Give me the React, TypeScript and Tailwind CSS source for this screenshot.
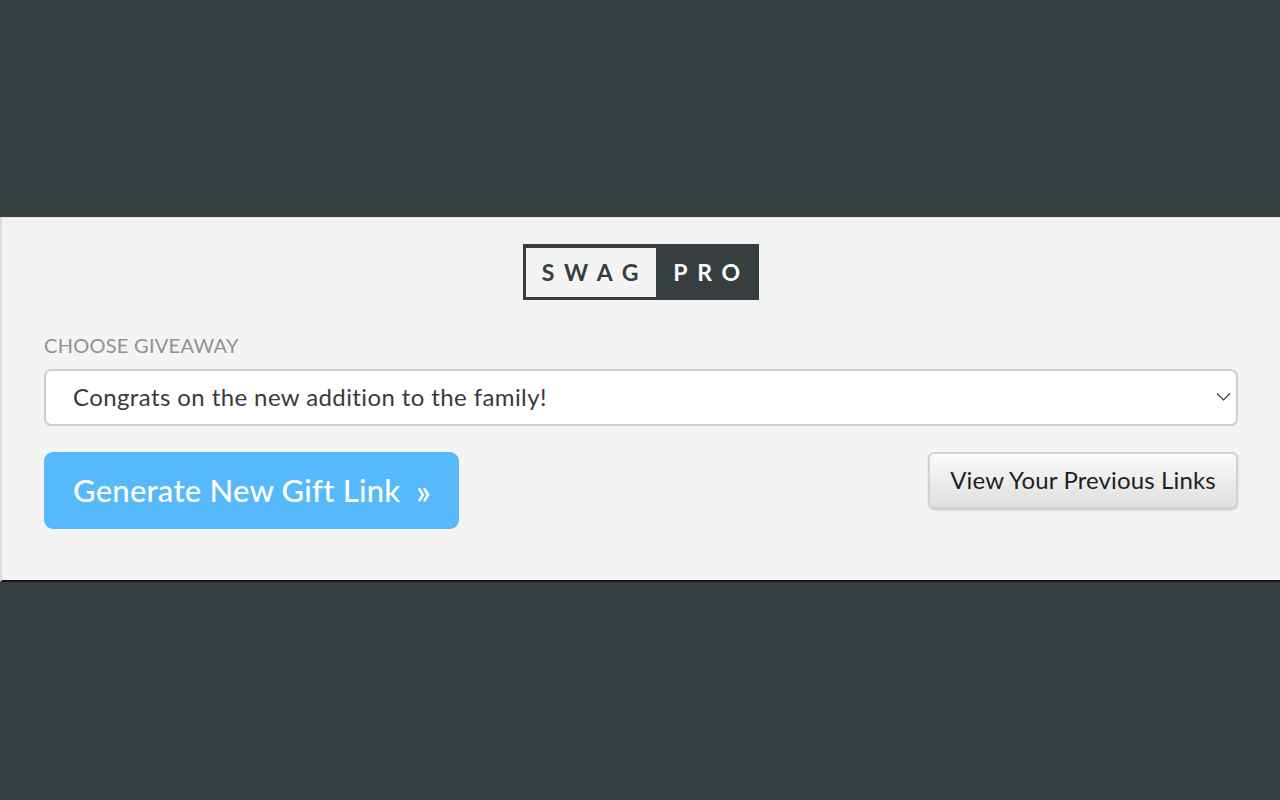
export default function App() {
  return (
    <div className="min-h-[800px] bg-[#373e40] flex flex-col font-['Lato',sans-serif]">
      <div className="h-[217px] shrink-0" />
      <div className="h-[365px] shrink-0 bg-[#f4f4f4] border-t border-t-[#e2e2e2] border-l-2 border-l-[#dcdcdc] border-b-2 border-b-[#15191a] pl-[42px] pr-[42px] pt-[26px]">
        <div className="flex justify-center">
          <div className="flex w-[236px] h-[56px] bg-[#373e40] pl-[3px] pt-[4px] pb-[3px]">
            <div className="w-[130px] bg-[#f4f4f4] flex items-center justify-center text-[#373e40] text-[23px] font-bold tracking-[0.42em] pl-[8px]">SWAG</div>
            <div className="flex-1 flex items-center justify-center text-white text-[23px] font-bold tracking-[0.42em] pl-[8px]">PRO</div>
          </div>
        </div>
        <div className="mt-[32px] text-[20px] leading-[26px] tracking-[0.27px] text-[#929292]">CHOOSE GIVEAWAY</div>
        <div className="relative mt-[11px]">
          <div className="h-[57px] bg-white border-2 border-[#cfcfcf] rounded-[7px] pl-[27px] pb-[1px] flex items-center text-[24px] tracking-[0.4px] text-[#3a3a3a]">Congrats on the new addition to the family!</div>
          <svg className="absolute right-[7px] top-[23px]" width="15" height="9" viewBox="0 0 15 9" fill="none" stroke="#3a3f42" strokeWidth="1.2"><path d="M1 1.5 L7.5 8 L14 1.5" /></svg>
        </div>
        <div className="flex justify-between items-start mt-[25px]">
          <button className="mt-[1px] w-[415px] h-[77px] rounded-[9px] bg-[#56b9fb] text-white text-[31px] tracking-[0.23px] font-medium flex items-center justify-between pl-[29px] pr-[28px]">
            <span>Generate New Gift Link</span><span className="text-[34px] leading-none">»</span>
          </button>
          <button className="mt-[1px] w-[310px] h-[57px] rounded-[6px] border-2 border-[#d2d2d2] bg-gradient-to-b from-[#fbfbfb] to-[#dfdfdf] shadow-[0_1px_2px_rgba(0,0,0,0.2)] text-[24px] tracking-[0.13px] text-[#1f1f1f] pb-[2px] flex items-center justify-center">View Your Previous Links</button>
        </div>
      </div>
      <div className="flex-1" />
    </div>
  );
}
